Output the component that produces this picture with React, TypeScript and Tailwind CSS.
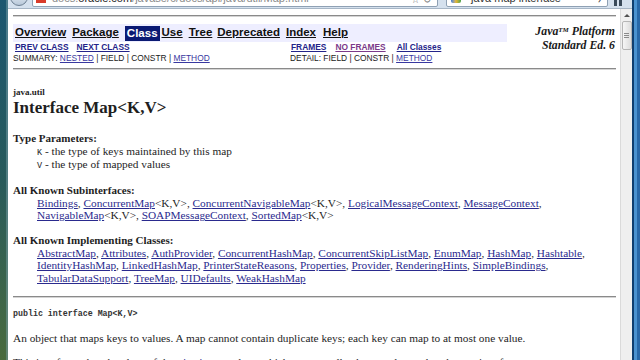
const serif = "font-['Liberation_Serif',serif]";
const sans = "font-['Liberation_Sans',Arial,sans-serif]";
const mono = "font-['Liberation_Mono',monospace]";
const link = "text-[#2a2a8e] underline underline-offset-[1px]";

function Chrome() {
  return (
    <div className="h-[9px] shrink-0 relative overflow-hidden bg-[#d5e1ee] border-b border-[#a7b6c6] flex items-start">
      <div className="ml-[2px] -mt-[12px] w-[18px] h-[18px] rounded-full border border-[#6d7f92] bg-gradient-to-b from-[#f4f8fc] to-[#b9c9da]" />
      <div className="ml-[4px] -mt-[14px] h-[21px] w-[406px] bg-white border border-[#8fa1b4] rounded-b-[2px] flex items-end pb-[2px] pl-[3px]">
        <div className="w-[10px] h-[8px] bg-[#d93b2a] mb-[1px]" />
        <span className={`${sans} ml-[6px] text-[11px] leading-[11px] text-[#8a8a8a]`}>
          docs.<span className="text-[#222]">oracle.com</span>/javase/6/docs/api/java/util/Map.html
        </span>
        <span className="ml-auto mr-[6px] text-[10px] leading-[10px] text-[#777]">☆ ↻</span>
      </div>
      <div className="ml-[8px] -mt-[14px] h-[21px] w-[162px] bg-white border border-[#8fa1b4] rounded-b-[2px] flex items-end pb-[2px] pl-[4px]">
        <div className="w-[10px] h-[8px] rounded-[2px] bg-gradient-to-r from-[#3f7ad8] via-[#e8b52c] to-[#3aa04a] mb-[1px]" />
        <span className={`${sans} ml-[10px] text-[11px] leading-[11px] text-[#333]`}>java map interface</span>
        <span className="ml-auto mr-[6px] text-[10px] leading-[10px] text-[#444]">›</span>
      </div>
      <div className="ml-[6px] -mt-[6px] flex gap-[2px]">
        <div className="w-[3px] h-[12px] bg-[#3a4a5a]" />
        <div className="w-[3px] h-[12px] bg-[#3a4a5a]" />
      </div>
    </div>
  );
}

function Scrollbar() {
  return (
    <div className="w-[12px] shrink-0 bg-[#efefef] border-l border-[#dadada] flex flex-col items-center">
      <div className="h-[12px] flex items-center justify-center">
        <div className="w-0 h-0 border-l-[3px] border-r-[3px] border-b-[3px] border-l-transparent border-r-transparent border-b-[#505050]" />
      </div>
      <div className="w-[10px] h-[29px] rounded-[2px] border border-[#b5b5b5] bg-gradient-to-r from-[#f6f6f6] to-[#dcdcdc] flex flex-col items-center justify-center gap-[1px]">
        <div className="w-[5px] h-px bg-[#8a8a8a]" />
        <div className="w-[5px] h-px bg-[#8a8a8a]" />
        <div className="w-[5px] h-px bg-[#8a8a8a]" />
      </div>
    </div>
  );
}

function Rule({ className }: { className: string }) {
  return <div className={`shrink-0 border-t border-[#8a8a8a] border-b border-b-[#d4d4d4] ${className}`} />;
}

function NavBar() {
  const item = `${sans} font-bold text-[11.5px] text-[#111] underline underline-offset-[1px]`;
  return (
    <div className="mt-[7px] h-[40px] shrink-0 flex">
      <div className="w-[494px] flex flex-col">
        <div className="h-[18px] bg-[#eeeeff] flex items-center pl-[2px]">
          <span className={item}>Overview</span>
          <span className={`${item} ml-[6px]`}>Package</span>
          <span className={`${sans} font-bold text-[11.5px] text-white bg-[#0b1a73] ml-[6px] px-[2px] h-[15px] leading-[15px]`}>Class</span>
          <span className={`${item} ml-[2px]`}>Use</span>
          <span className={`${item} ml-[6px]`}>Tree</span>
          <span className={`${item} ml-[5px]`}>Deprecated</span>
          <span className={`${item} ml-[6px]`}>Index</span>
          <span className={`${item} ml-[7px]`}>Help</span>
        </div>
        <div className={`h-[11px] flex items-center ${sans} font-bold text-[8.4px] leading-[11px]`}>
          <div className="w-[278px] pl-[2px] flex gap-[8px]">
            <span className="text-[#24248a] underline">PREV CLASS</span>
            <span className="text-[#24248a] underline">NEXT CLASS</span>
          </div>
          <div className="flex">
            <span className="text-[#24248a] underline">FRAMES</span>
            <span className="ml-[9px] text-[#7b3a8a] underline">NO FRAMES</span>
            <span className="ml-[11px] text-[#24248a] underline">All Classes</span>
          </div>
        </div>
        <div className={`h-[11px] flex items-center ${sans} text-[8.4px] leading-[11px] text-[#1a1a1a]`}>
          <div className="w-[277px]">
            SUMMARY: <span className="text-[#3838a0] underline">NESTED</span> | FIELD | CONSTR | <span className="text-[#3838a0] underline">METHOD</span>
          </div>
          <div>
            DETAIL: FIELD | CONSTR | <span className="text-[#3838a0] underline">METHOD</span>
          </div>
        </div>
      </div>
      <div className={`flex-1 text-right pr-[1px] pt-[1px] ${serif} font-bold italic text-[11.8px] leading-[13.5px] text-[#1a1a1a]`}>
        Java<sup className="text-[7px]">TM</sup> Platform
        <br />
        Standard Ed. 6
      </div>
    </div>
  );
}

function L({ children }: { children: string }) {
  return <span className={link}>{children}</span>;
}

export default function App() {
  const line = "h-[12.5px] leading-[12.5px] pl-[24px] whitespace-nowrap";
  const head = "h-[14px] leading-[14px] font-bold text-[11px] whitespace-nowrap";
  return (
    <div className="w-[640px] h-[360px] overflow-hidden flex bg-white">
      <div className="w-[8px] h-full shrink-0 bg-gradient-to-b from-[#1b5670] via-[#285a5a] to-[#496b3c] flex justify-end">
        <div className="w-[2px] h-full bg-[#7aa0a8] opacity-50" />
      </div>
      <div className="flex-1 min-w-0 flex flex-col">
        <Chrome />
        <div className="flex-1 min-h-0 flex">
          <div className={`flex-1 min-w-0 overflow-hidden pl-[5px] pr-[4px] flex flex-col ${serif} text-[11.3px] text-[#1e1e1e]`}>
            <Rule className="mt-[6px]" />
            <NavBar />
            <Rule className="mt-[4px]" />
            <div className="mt-[17px] h-[11px] leading-[11px] font-bold text-[9px]">java.util</div>
            <div className="h-[20px] leading-[20px] font-bold text-[17px] whitespace-nowrap">Interface Map&lt;K,V&gt;</div>
            <div className={`mt-[13.3px] ${head}`}>Type Parameters:</div>
            <div className={line}>
              <span className={`${mono} text-[8.5px]`}>K</span> - the type of keys maintained by this map
            </div>
            <div className={line}>
              <span className={`${mono} text-[8.5px]`}>V</span> - the type of mapped values
            </div>
            <div className={`mt-[12.7px] ${head}`}>All Known Subinterfaces:</div>
            <div className={line}>
              <L>Bindings</L>, <L>ConcurrentMap</L>&lt;K,V&gt;, <L>ConcurrentNavigableMap</L>&lt;K,V&gt;, <L>LogicalMessageContext</L>, <L>MessageContext</L>,
            </div>
            <div className={line}>
              <L>NavigableMap</L>&lt;K,V&gt;, <L>SOAPMessageContext</L>, <L>SortedMap</L>&lt;K,V&gt;
            </div>
            <div className={`mt-[11px] ${head}`}>All Known Implementing Classes:</div>
            <div className={line}>
              <L>AbstractMap</L>, <L>Attributes</L>, <L>AuthProvider</L>, <L>ConcurrentHashMap</L>, <L>ConcurrentSkipListMap</L>, <L>EnumMap</L>, <L>HashMap</L>, <L>Hashtable</L>,
            </div>
            <div className={line}>
              <L>IdentityHashMap</L>, <L>LinkedHashMap</L>, <L>PrinterStateReasons</L>, <L>Properties</L>, <L>Provider</L>, <L>RenderingHints</L>, <L>SimpleBindings</L>,
            </div>
            <div className={line}>
              <L>TabularDataSupport</L>, <L>TreeMap</L>, <L>UIDefaults</L>, <L>WeakHashMap</L>
            </div>
            <Rule className="mt-[11.5px]" />
            <div className={`mt-[10.3px] h-[12px] leading-[12px] ${mono} font-bold text-[8.3px] text-[#333] whitespace-nowrap`}>
              public interface Map&lt;K,V&gt;
            </div>
            <div className="mt-[11px] h-[14px] leading-[14px] whitespace-nowrap">
              An object that maps keys to values. A map cannot contain duplicate keys; each key can map to at most one value.
            </div>
            <div className="mt-[9.4px] h-[14px] leading-[14px] whitespace-nowrap">
              This interface takes the place of the <span className={`${mono} text-[9px] ${link}`}>Dictionary</span> class, which was a totally abstract class rather than an interface.
            </div>
          </div>
          <Scrollbar />
        </div>
      </div>
      <div className="w-[8px] h-full shrink-0 bg-[#1d5c9a] flex">
        <div className="w-[2px] h-full bg-[#0f3f70]" />
        <div className="w-[3px] h-full bg-[#4b93d0]" />
        <div className="w-[3px] h-full bg-[#2868a8]" />
      </div>
    </div>
  );
}
